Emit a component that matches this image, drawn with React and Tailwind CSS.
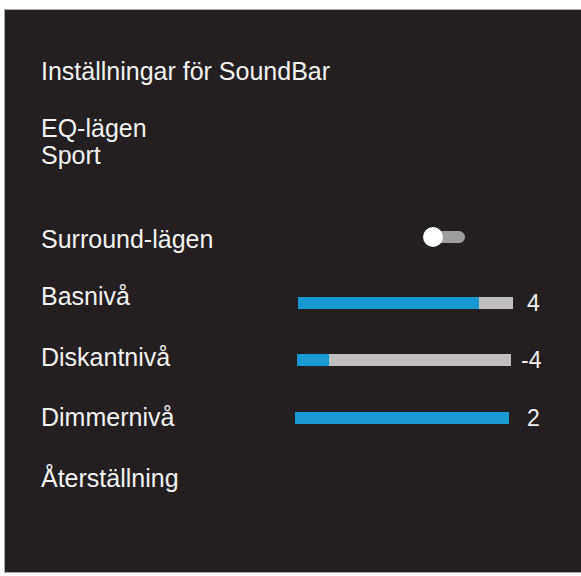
import React from 'react';

const font = { fontFamily: '"Liberation Sans", Arial, sans-serif' };

function Barra({ ancho, relleno, className }) {
  return (
    <div className={`h-[12px] bg-[#bfbfbf] ${className}`} style={{ width: ancho }}>
      <div className="h-full bg-[#1a98d2]" style={{ width: relleno }} />
    </div>
  );
}

export default function App() {
  return (
    <div className="w-[581px] h-[576px] bg-white pt-[9px] pl-[4px]" style={font}>
      <div className="h-[564px] bg-[#231f20] border-l border-t border-b border-[#a8a8a8] pl-[36px] pt-[47px] text-[25px] text-[#f2f2f2]">
        {/* Titulo */}
        <div className="leading-[28px]">Inställningar för SoundBar</div>

        {/* EQ */}
        <div className="mt-[30px] leading-[27px]">
          <div>EQ-lägen</div>
          <div>Sport</div>
        </div>

        {/* Surround */}
        <div className="mt-[56px] h-[28px] flex items-start">
          <div className="w-[382px] leading-[28px]">Surround-lägen</div>
          <div className="mt-[2px] flex items-center">
            <div className="w-[20px] h-[20px] rounded-full bg-white relative z-10" />
            <div className="-ml-[8px] w-[30px] h-[12px] rounded-r-full bg-[#9e9e9e]" />
          </div>
        </div>

        {/* Basnivå */}
        <div className="mt-[29px] h-[28px] flex items-start">
          <div className="w-[256px] leading-[28px]">Basnivå</div>
          <div className="mt-[7px] ml-[1px] flex items-center h-[28px]">
            <Barra ancho={215} relleno={181} />
            <span className="ml-[14px] text-[23px] leading-[28px]">4</span>
          </div>
        </div>

        {/* Diskantnivå */}
        <div className="mt-[33px] h-[28px] flex items-start">
          <div className="w-[256px] leading-[28px]">Diskantnivå</div>
          <div className="mt-[3px] flex items-center h-[28px]">
            <Barra ancho={214} relleno={32} className="h-[11px]" />
            <span className="ml-[10px] text-[23px] leading-[28px]">-4</span>
          </div>
        </div>

        {/* Dimmernivå */}
        <div className="mt-[32px] h-[28px] flex items-start">
          <div className="w-[256px] leading-[28px]">Dimmernivå</div>
          <div className="mt-[1px] -ml-[2px] flex items-center h-[28px]">
            <Barra ancho={214} relleno={214} />
            <span className="ml-[18px] text-[23px] leading-[28px]">2</span>
          </div>
        </div>

        {/* Återställning */}
        <div className="mt-[33px] leading-[28px]">Återställning</div>
      </div>
    </div>
  );
}
